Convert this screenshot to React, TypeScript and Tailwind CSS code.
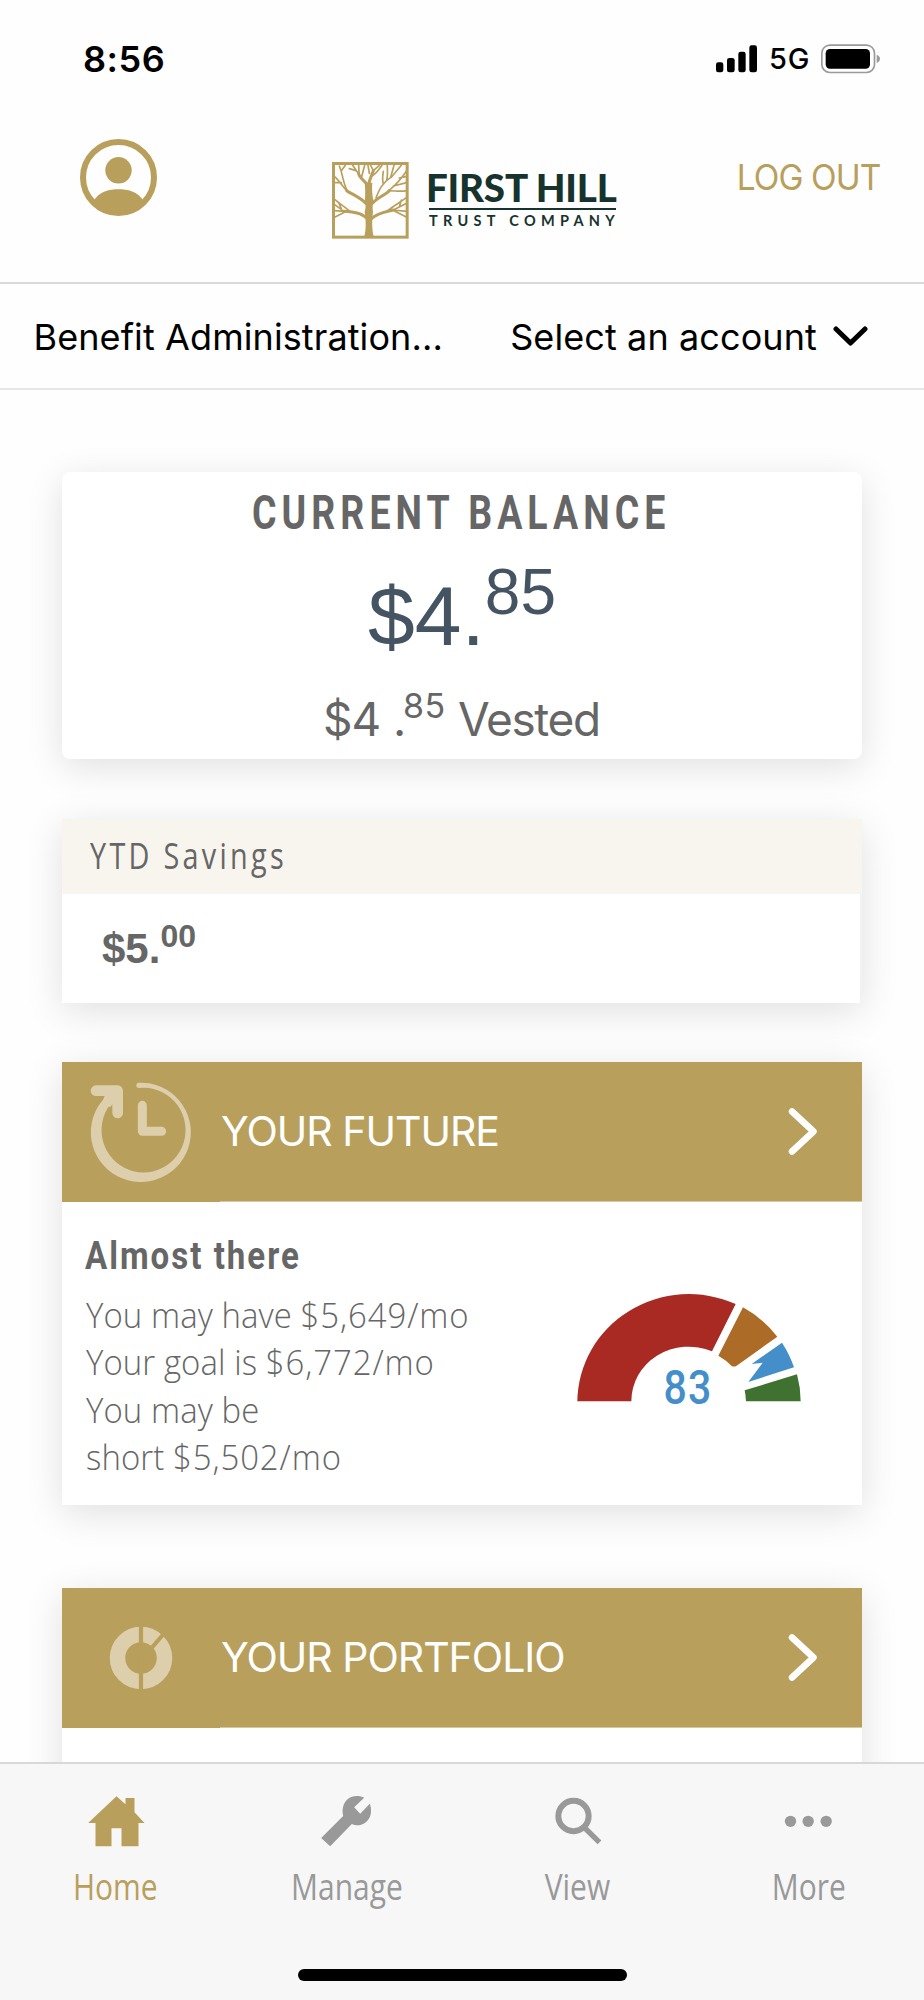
import React from "react";

const SHADOW = "shadow-[0_8px_36px_rgba(0,0,0,0.12)]";

function StatusBar() {
  return (
    <div className="flex h-[117px] shrink-0 items-center pr-[44px] pl-[83px] text-black">
      <span className="text-[36px] leading-none font-semibold tracking-[0.5px]">8:56</span>
      <svg className="ml-auto h-[28px] w-[42px]" viewBox="48 44 126 84">
        <rect x="48" y="96" width="22" height="30" rx="7" />
        <rect x="81" y="83" width="23" height="43" rx="7" />
        <rect x="115" y="64" width="22" height="62" rx="7" />
        <rect x="148" y="45" width="23" height="81" rx="7" />
      </svg>
      <span className="ml-[11px] w-[40px] text-[29px] leading-[30px] font-medium tracking-[0.8px] whitespace-nowrap">5G</span>
      <svg className="ml-[11px] h-[30px] w-[60px]" viewBox="360 41 180 90">
        <rect x="365.5" y="44.5" width="158" height="82" rx="24" fill="none" stroke="#9a9a9a" strokeWidth="5" />
        <rect x="377" y="56" width="133" height="59" rx="13" />
        <path d="M530 73 q10 4 10 12.500 q0 8.500 -10 12.500z" fill="#9a9a9a" />
      </svg>
    </div>
  );
}

function Avatar() {
  return (
    <svg className="mt-[22px] ml-[80px] h-[77px] w-[77px] shrink-0" viewBox="0 0 77 77" fill="#b99f5c">
      <circle cx="38.500" cy="38.500" r="35.500" fill="none" stroke="#b99f5c" strokeWidth="6" />
      <circle cx="38.500" cy="31.300" r="13.200" />
      <path d="M13 63 C19 52 30 50.300 38.500 50.300 S58 52 64 63 A36 36 0 0 1 13 63Z" />
    </svg>
  );
}

function TreeLogo() {
  return (
    <svg
      className="h-[77px] w-[77px] shrink-0"
      viewBox="36 36 231 231"
      fill="none"
      stroke="#b99f5c"
      strokeLinecap="round"
      strokeLinejoin="round"
    >
      <rect x="40.500" y="40.500" width="221" height="221" strokeWidth="9" strokeLinejoin="miter" />
      <path
        d="M132 262 C139 240 138 210 134 186 C137 175 138 165 135 150 C136 130 136 115 134 98 L157 98 C155 120 157 135 160 150 C158 165 157 175 159 186 C156 210 155 240 162 262Z"
        fill="#b99f5c"
        stroke="none"
      />
      <g strokeWidth="9">
        <path d="M138 160 C120 142 98 134 80 122" />
        <path d="M157 160 C172 142 195 136 208 122" />
        <path d="M140 205 C125 188 100 186 72 184" />
        <path d="M156 205 C170 190 195 186 220 180" />
        <path d="M146 105 C148 88 155 76 160 62" />
        <path d="M146 108 C138 96 122 88 116 72" />
      </g>
      <g strokeWidth="5">
        <path d="M80 122 C66 108 58 92 44 80M82 122 C68 98 70 76 58 48M64 98 L44 98M64 62 L76 46" />
        <path d="M116 72 L98 46M118 80 L116 46M108 62 L88 56M124 84 L134 46" />
        <path d="M160 62 L152 46M160 62 L178 46M156 78 C166 74 172 66 186 46M148 70 L144 46" />
        <path d="M168 144 C178 118 186 100 212 82 L222 46M200 90 C204 76 202 62 202 46M190 102 C186 88 188 76 190 64" />
        <path d="M206 122 C226 106 240 92 260 62M220 108 L260 98M214 82 L244 46M238 84 L256 80" />
        <path d="M206 122 C225 122 240 126 260 122" />
        <path d="M72 184 L44 164M90 184 C74 170 60 162 44 148M72 184 L44 182M76 185 L44 202M64 176 L56 158" />
        <path d="M220 180 L260 160M200 184 C220 168 236 160 260 142M220 180 L260 184M222 182 L260 202M238 170 L244 150" />
      </g>
    </svg>
  );
}

function Header() {
  return (
    <header className="flex h-[165px] shrink-0 items-start pr-[44px]">
      <Avatar />
      <div className="mt-[45px] ml-[175px] flex">
        <TreeLogo />
        <div className="ml-[20px] flex w-[187px] flex-col pt-[5px] font-['Lato',sans-serif] text-[#17332d]">
          <span className="ml-[-3px] text-[38.5px] leading-[41px] font-black tracking-[-0.2px] whitespace-nowrap">FIRST HILL</span>
          <span className="h-[2px] bg-[#17332d]" />
          <span className="text-[14.5px] leading-[22px] font-bold tracking-[5.3px] whitespace-nowrap">TRUST COMPANY</span>
        </div>
      </div>
      <button className="mt-[40px] ml-auto origin-right scale-x-[0.93] text-[36px] leading-[40px] tracking-[-1px] whitespace-nowrap text-[#b99f5c]">
        LOG OUT
      </button>
    </header>
  );
}

function AccountBar() {
  return (
    <div className="flex h-[108px] shrink-0 items-center border-y-2 border-t-[#d9d9d9] border-b-[#e6e6e6] pr-[56px] pl-[33.500px] text-[36px] leading-[40px] text-black">
      <span className="pt-px tracking-[0.1px] whitespace-nowrap">Benefit Administration...</span>
      <span className="ml-auto pt-px tracking-[0.1px] whitespace-nowrap">Select an account</span>
      <svg className="ml-[16px] h-[20px] w-[35px]" viewBox="0 0 35 20" fill="none" stroke="#000" strokeWidth="5" strokeLinecap="round" strokeLinejoin="round">
        <path d="M3 3 L17.500 17 L32 3" />
      </svg>
    </div>
  );
}

function BalanceCard() {
  return (
    <section className={`${SHADOW} mt-[82px] flex h-[287px] shrink-0 flex-col rounded-lg bg-white`}>
      <h2 className="ml-[190px] h-[80px] origin-left scale-x-[0.78] font-['Roboto',sans-serif] text-[48px] leading-[82px] font-bold tracking-[6.5px] whitespace-nowrap text-[#666]">
        CURRENT BALANCE
      </h2>
      <div className="flex h-[128px] items-start pl-[306px] font-['Liberation_Sans',sans-serif] text-[#455462]">
        <span className="text-[84px] leading-[128px]">$4.</span>
        <span className="text-[64px] leading-[80px]">85</span>
      </div>
      <div className="flex h-[78px] items-start pl-[261px] text-[#666]">
        <span className="w-[70px] text-[46px] leading-[78px] tracking-[-1px]">$4</span>
        <span className="w-[10px] text-[46px] leading-[78px]">.</span>
        <span className="w-[55px] text-[34px] leading-[51px] tracking-[0.5px]">85</span>
        <span className="text-[46px] leading-[78px] tracking-[-1.4px]">Vested</span>
      </div>
    </section>
  );
}

function SavingsCard() {
  return (
    <section className={`${SHADOW} mt-[60px] shrink-0 bg-[#f2f2f4]`}>
      <div className="h-[75px] bg-[#f8f5ee] pl-[28px]">
        <h3 className="origin-left scale-x-[0.8] font-['Open_Sans',sans-serif] text-[36px] leading-[74px] tracking-[4.1px] whitespace-nowrap text-[#666]">
          YTD Savings
        </h3>
      </div>
      <div className="flex h-[109px] w-[798px] items-start bg-white pl-[40px] font-['Liberation_Sans',sans-serif] font-bold text-[#666]">
        <span className="text-[42px] leading-[109px]">$5.</span>
        <span className="text-[32px] leading-[85px]">00</span>
      </div>
    </section>
  );
}

function CardHeader({ icon, title }: { icon: React.ReactNode; title: string }) {
  return (
    <div className="flex h-[140px] shrink-0 bg-[#b99f5c]">
      <div className="flex w-[158px] items-center justify-center">{icon}</div>
      <div className="flex flex-1 items-center border-b border-[#d5c7a1] pr-[45px] pl-px text-white">
        <span className="text-[41px] leading-none tracking-[-1px] whitespace-nowrap">{title}</span>
        <svg className="ml-auto h-[47px] w-[29px]" viewBox="0 0 29 47" fill="none" stroke="#fff" strokeWidth="6.500" strokeLinecap="round" strokeLinejoin="round">
          <path d="M4 3.500 L25.500 23.500 L4 43.500" />
        </svg>
      </div>
    </div>
  );
}

function HistoryClock() {
  return (
    <svg className="h-[130px] w-[150px] translate-x-[4px] translate-y-[3px]" viewBox="0 0 450 390" fill="#ddcfac">
      <path d="M207 38 A150 149 0 1 1 104 84 L130 92 A126 127 0 1 0 207 54 A8 8 0 0 1 207 38Z" />
      <path d="M104 78 L143 62 L143 84 L120 112 L96 98Z" />
      <path d="M78 62 H143 V129" fill="none" stroke="#ddcfac" strokeWidth="32" strokeLinecap="round" strokeLinejoin="round" />
      <path d="M217 106 V184 H275" fill="none" stroke="#ddcfac" strokeWidth="27" strokeLinecap="round" strokeLinejoin="round" />
    </svg>
  );
}

function Donut() {
  return (
    <svg className="h-[64px] w-[64px]" viewBox="-32 -32 64 64" fill="none">
      <circle r="23.500" stroke="#ddcfac" strokeWidth="15.500" />
      <path d="M0 -32 V32 M8 -7 L26 -28" stroke="#b99f5c" strokeWidth="4.200" />
    </svg>
  );
}

function Gauge() {
  return (
    <svg className="h-[150px] w-[260px]" viewBox="0 0 780 450">
      <path fill="#a82a23" d="M52 394 A335 325 0 0 1 527 102 L456 244 A172 163 0 0 0 214 394Z" />
      <path fill="#ad6b28" d="M549 112 A335 325 0 0 1 652 200 L530 287 Q522 292 515 288 Q498 270 475 257Z" />
      <path fill="#448fca" d="M666 218 A335 325 0 0 1 702 292 L565 336 L608 278 L575 282Z" />
      <path fill="#3f7131" d="M711 313 A335 325 0 0 1 722 394 L558 394 Q557 375 554 361Z" />
      <text transform="translate(384 401) scale(0.86 1)" textAnchor="middle" fontFamily="Roboto, sans-serif" fontSize="143" fontWeight="500" letterSpacing="4" fill="#448fca">
        83
      </text>
    </svg>
  );
}

function FutureCard() {
  return (
    <section className={`${SHADOW} mt-[59px] flex shrink-0 flex-col bg-white`}>
      <CardHeader icon={<HistoryClock />} title="YOUR FUTURE" />
      <div className="flex h-[303px] pr-[42px] pl-[23px] text-[#666]">
        <div className="flex-1 pt-[34px]">
          <h3 className="origin-left scale-x-[0.87] font-['Roboto',sans-serif] text-[38px] leading-[41px] font-bold tracking-[2.3px] whitespace-nowrap">
            Almost there
          </h3>
          <p className="mt-[14px] ml-px origin-left scale-x-[0.94] font-['Open_Sans',sans-serif] text-[35px] leading-[47.4px] font-light tracking-[0.1px] whitespace-nowrap">
            You may have <span className="tracking-[1px]">$5,649/mo</span>
            <br />
            Your goal is <span className="tracking-[1px]">$6,772/mo</span>
            <br />
            You may be
            <br />
            short <span className="tracking-[1px]">$5,502/mo</span>
          </p>
        </div>
        <div className="pt-[68px]">
          <Gauge />
        </div>
      </div>
    </section>
  );
}

function PortfolioCard() {
  return (
    <section className={`${SHADOW} mt-[83px] flex h-[300px] shrink-0 flex-col bg-white`}>
      <CardHeader icon={<Donut />} title="YOUR PORTFOLIO" />
    </section>
  );
}

function NavItem({ label, active, viewBox, children }: { label: string; active?: boolean; viewBox: string; children: React.ReactNode }) {
  return (
    <button className={`flex flex-col items-center ${active ? "text-[#b99f5c]" : "text-[#999]"}`}>
      <svg className="h-[60px] w-[60px]" viewBox={viewBox} fill="currentColor">
        {children}
      </svg>
      <span className="mt-[14px] scale-x-[0.81] font-['Open_Sans',sans-serif] text-[37px] leading-[44px] whitespace-nowrap">{label}</span>
    </button>
  );
}

function BottomNav() {
  return (
    <nav className="relative z-10 flex h-[238px] shrink-0 flex-col border-t-2 border-[#d8d8d8] bg-[#f7f7f7]">
      <div className="grid grid-cols-4 pt-[26px]">
        <NavItem label="Home" active viewBox="76.5 30 180 180">
          <path d="M168 49 L195 73 V54 H222 V97 L252 129 H234 V199 H183 V145 H153 V199 H105 V129 H83Z" />
        </NavItem>
        <NavItem label="Manage" viewBox="769.5 30 180 180">
          <path d="M911 53 L881 82 L899 101 L928 71 C938 100 927 126 902 134 C892 137 882 136 874 132 L809 199 L782 174 L848 108 C842 82 852 60 872 51 C885 46 900 47 911 53Z" />
        </NavItem>
        <NavItem label="View" viewBox="52.5 30 180 180">
          <circle cx="129" cy="108" r="45.500" fill="none" stroke="currentColor" strokeWidth="18" />
          <path d="M163 144 L207 187" stroke="currentColor" strokeWidth="16" />
        </NavItem>
        <NavItem label="More" viewBox="745.5 30 180 180">
          <circle cx="780" cy="124" r="17" />
          <circle cx="833" cy="124" r="17" />
          <circle cx="887" cy="124" r="17" />
        </NavItem>
      </div>
      <div className="mx-auto mt-auto mb-[19px] h-[12px] w-[329px] rounded-full bg-black" />
    </nav>
  );
}

export default function App() {
  return (
    <div className="flex h-[2000px] w-[924px] flex-col overflow-hidden bg-[#fefefe] font-['Inter',sans-serif]">
      <StatusBar />
      <Header />
      <AccountBar />
      <main className="flex min-h-0 flex-1 flex-col overflow-hidden px-[62px]">
        <BalanceCard />
        <SavingsCard />
        <FutureCard />
        <PortfolioCard />
      </main>
      <BottomNav />
    </div>
  );
}
